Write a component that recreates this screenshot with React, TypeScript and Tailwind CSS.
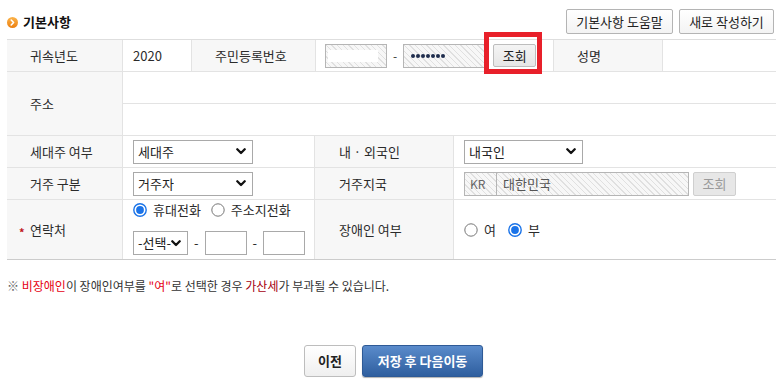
import type { ReactNode } from 'react'

const hatch =
  'bg-[repeating-linear-gradient(45deg,#f7f7f7_0px,#f7f7f7_3px,#e0e0e0_3px,#e0e0e0_4px)]'

function Chevron() {
  return (
    <svg width="10" height="7" viewBox="0 0 10 7" className="shrink-0">
      <path d="M1.3 1.3 L5 5 L8.7 1.3" fill="none" stroke="#111" strokeWidth="2.3" strokeLinecap="round" strokeLinejoin="round" />
    </svg>
  )
}

function SelectBox({ value, width }: { value: string; width: string }) {
  return (
    <div className={`${width} flex h-[24px] items-center justify-between border border-[#a9a9a9] bg-white pl-[4px] pr-[6px] text-[13px] text-[#222]`}>
      <span className="overflow-hidden whitespace-nowrap">{value}</span>
      <Chevron />
    </div>
  )
}

function Radio({ checked }: { checked?: boolean }) {
  return (
    <svg width="14" height="14" viewBox="0 0 14 14" className="shrink-0">
      {checked ? (
        <>
          <circle cx="7" cy="7" r="6.2" fill="#fff" stroke="#1a73e8" strokeWidth="1.4" />
          <circle cx="7" cy="7" r="3.9" fill="#1a73e8" />
        </>
      ) : (
        <circle cx="7" cy="7" r="6.2" fill="#fff" stroke="#767676" strokeWidth="1" />
      )}
    </svg>
  )
}

function Label({ children, first, className = '' }: { children: ReactNode; first?: boolean; className?: string }) {
  return (
    <div
      className={`relative flex items-center bg-[#f7f7f7] pl-[23px] text-[13px] text-[#2b2b2b] ${first ? '' : 'border-l border-[#e3e3e3]'} ${className}`}
    >
      {children}
    </div>
  )
}

function Value({ children, className = '' }: { children?: ReactNode; className?: string }) {
  return <div className={`flex items-center border-l border-[#e3e3e3] pl-[10px] text-[13px] text-[#2b2b2b] ${className}`}>{children}</div>
}

export default function App() {
  return (
    <div className="relative h-[386px] w-[783px] bg-white px-[7px] pt-[9px] font-['Noto_Sans_CJK_KR','Noto_Sans',sans-serif] text-[#333]">
      {/* 상단 제목 + 버튼 */}
      <div className="flex h-[25px] items-center justify-between pr-[2px]">
        <div className="flex items-center gap-[5px] pt-[1px]">
          <svg width="11" height="11" viewBox="0 0 11 11">
            <defs>
              <linearGradient id="og" x1="0" y1="0" x2="0" y2="1">
                <stop offset="0" stopColor="#fbb44a" />
                <stop offset="1" stopColor="#ec7f10" />
              </linearGradient>
            </defs>
            <circle cx="5.5" cy="5.5" r="5.5" fill="url(#og)" />
            <path d="M4.2 3 L6.6 5.5 L4.2 8" fill="none" stroke="#fff" strokeWidth="1.6" strokeLinecap="round" strokeLinejoin="round" />
          </svg>
          <span className="text-[13px] font-bold text-[#111]">기본사항</span>
        </div>
        <div className="flex gap-[6px]">
          <button className="h-[25px] w-[107px] rounded-[2px] border border-[#b4b4b4] bg-gradient-to-b from-white to-[#f3f3f3] text-[13px] text-[#222]">
            기본사항 도움말
          </button>
          <button className="h-[25px] w-[95px] rounded-[2px] border border-[#b4b4b4] bg-gradient-to-b from-white to-[#f3f3f3] text-[13px] text-[#222]">
            새로 작성하기
          </button>
        </div>
      </div>

      {/* 폼 테이블 */}
      <div className="mt-[5px] border-t border-[#dedede]">
        <div className="grid h-[32px] grid-cols-[115px_69px_124px_238px_109px_115px] border-b border-[#e3e3e3]">
          <Label first>귀속년도</Label>
          <Value className="text-[12px]">2020</Value>
          <Label>주민등록번호</Label>
          <div className="flex items-center border-l border-[#e3e3e3] pl-[9px]">
            <div className={`flex h-[24px] w-[62px] items-center border border-[#b5b5b5] pl-[2px] ${hatch}`}>
              <div className="h-[12px] w-[50px] bg-white" />
            </div>
            <span className="mx-[6px] text-[12px] text-[#333]">-</span>
            <div className={`flex h-[24px] w-[83px] items-center gap-[1px] border border-[#b5b5b5] pl-[7px] ${hatch}`}>
              {[0, 1, 2, 3, 4, 5, 6].map((i) => (
                <span key={i} className="size-[4px] rounded-full bg-[#1f2d4d]" />
              ))}
            </div>
            <button className="ml-[7px] h-[23px] w-[43px] rounded-[2px] border border-[#bdbdbd] bg-gradient-to-b from-[#f4f4f4] to-[#e6e6e6] text-[13px] text-[#222]">
              조회
            </button>
          </div>
          <Label>성명</Label>
          <Value />
        </div>

        <div className="grid grid-cols-[115px_1fr] border-b border-[#e3e3e3]">
          <Label first>주소</Label>
          <div className="border-l border-[#e3e3e3]">
            <div className="h-[32px] border-b border-[#e3e3e3]" />
            <div className="h-[31px]" />
          </div>
        </div>

        <div className="grid h-[32px] grid-cols-[115px_192px_139px_324px] border-b border-[#e3e3e3]">
          <Label first>세대주 여부</Label>
          <Value>
            <SelectBox value="세대주" width="w-[120px]" />
          </Value>
          <Label className="pl-[24px]">내 · 외국인</Label>
          <Value>
            <SelectBox value="내국인" width="w-[119px]" />
          </Value>
        </div>

        <div className="grid h-[32px] grid-cols-[115px_192px_139px_324px] border-b border-[#e3e3e3]">
          <Label first>거주 구분</Label>
          <Value>
            <SelectBox value="거주자" width="w-[120px]" />
          </Value>
          <Label className="pl-[24px]">거주지국</Label>
          <Value>
            <div className={`flex h-[24px] w-[33px] items-center border border-[#b5b5b5] pl-[5px] text-[12px] text-[#666] ${hatch}`}>KR</div>
            <div className={`-ml-px flex h-[24px] w-[193px] items-center border border-[#b5b5b5] pl-[6px] text-[13px] text-[#555] ${hatch}`}>
              대한민국
            </div>
            <button className="ml-[4px] h-[24px] w-[43px] rounded-[2px] border border-[#cfcfcf] bg-[#e7e7e7] text-[13px] text-[#9a9a9a]">조회</button>
          </Value>
        </div>

        <div className="grid h-[60px] grid-cols-[115px_192px_139px_324px] border-b border-[#cccccc]">
          <Label first>
            <span className="absolute left-[12px] top-[24px] text-[11px] font-bold text-[#c0161c]">*</span>
            연락처
          </Label>
          <div className="flex flex-col border-l border-[#e3e3e3] pl-[10px] pt-[3px] text-[13px] text-[#2b2b2b]">
            <div className="flex h-[14px] items-center">
              <Radio checked />
              <span className="ml-[6px]">휴대전화</span>
              <span className="ml-[10px]">
                <Radio />
              </span>
              <span className="ml-[6px]">주소지전화</span>
            </div>
            <div className="mt-[14px] flex h-[24px] items-center">
              <SelectBox value="-선택-" width="w-[55px]" />
              <span className="mx-[6px]">-</span>
              <div className="h-[24px] w-[42px] border border-[#a9a9a9] bg-white" />
              <span className="mx-[6px]">-</span>
              <div className="h-[24px] w-[42px] border border-[#a9a9a9] bg-white" />
            </div>
          </div>
          <Label className="pl-[24px]">장애인 여부</Label>
          <Value>
            <Radio />
            <span className="ml-[6px]">여</span>
            <span className="ml-[12px]">
              <Radio checked />
            </span>
            <span className="ml-[6px]">부</span>
          </Value>
        </div>
      </div>

      {/* 안내 문구 */}
      <p className="mt-[17px] text-[12px] text-[#333]">
        <span className="text-[#666]">※ </span>
        <span className="text-[#e60012]">비장애인</span>이 장애인여부를 <span className="text-[#e60012]">"여"</span>로 선택한 경우{' '}
        <span className="text-[#a50010]">가산세</span>가 부과될 수 있습니다.
      </p>

      {/* 하단 버튼 */}
      <div className="mt-[50px] flex justify-center gap-[6px] pl-[4px]">
        <button className="h-[32px] w-[52px] rounded-[3px] border border-[#bdbdbd] bg-gradient-to-b from-white to-[#efefef] text-[13px] font-bold text-[#222]">
          이전
        </button>
        <button className="h-[32px] w-[121px] rounded-[3px] border border-[#2e5a96] bg-gradient-to-b from-[#5a8bcb] to-[#2f5f9f] text-[13px] font-bold text-white shadow-[0_1px_1px_rgba(0,0,0,0.3)]">
          저장 후 다음이동
        </button>
      </div>

      {/* 강조 표시 */}
      <div className="pointer-events-none absolute left-[484px] top-[32px] h-[42px] w-[58px] border-[5px] border-[#e8202a]" />
    </div>
  )
}
